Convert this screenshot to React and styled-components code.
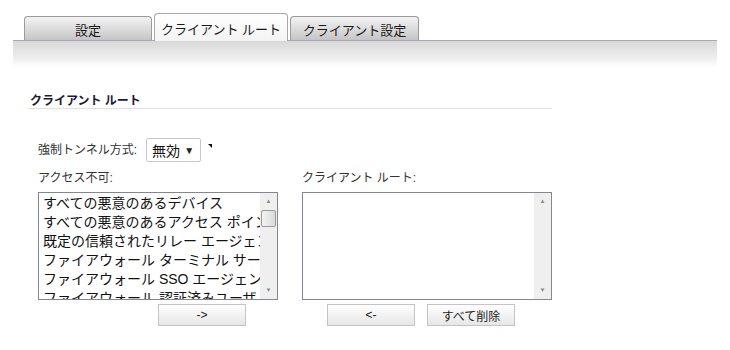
import React from 'react';
import styled, { createGlobalStyle } from 'styled-components';

const GlobalStyle = createGlobalStyle`
  body {
    margin: 0;
    background: #fff;
    font-family: "Liberation Sans", "Noto Sans CJK JP", sans-serif;
  }
`;

const tabs = ['設定', 'クライアント ルート', 'クライアント設定'];

const blocked = [
  'すべての悪意のあるデバイス',
  'すべての悪意のあるアクセス ポイント',
  '既定の信頼されたリレー エージェント',
  'ファイアウォール ターミナル サーバ',
  'ファイアウォール SSO エージェント',
  'ファイアウォール 認証済みユーザ',
];

function ScrollList({ items, width, thumb }) {
  return (
    <ListBox width={width}>
      <ListItems>
        {items.map((item, i) => (
          <ListItem key={i}>{item}</ListItem>
        ))}
      </ListItems>
      <ScrollTrack>
        <Arrow>▲</Arrow>
        <ThumbArea>{thumb && <Thumb />}</ThumbArea>
        <Arrow>▼</Arrow>
      </ScrollTrack>
    </ListBox>
  );
}

function App() {
  return (
    <Page>
      <GlobalStyle />
      <TabBar>
        {tabs.map((t, i) => (
          <Tab key={t} active={i === 1} width={i === 0 ? 128 : i === 1 ? 134 : 129}>
            {t}
          </Tab>
        ))}
      </TabBar>
      <Band />
      <Content>
        <SectionTitle>クライアント ルート</SectionTitle>
        <TunnelRow>
          <Label>強制トンネル方式:</Label>
          <Select>
            <span>無効</span>
            <Caret>▼</Caret>
          </Select>
          <Corner />
        </TunnelRow>
        <Columns>
          <Column>
            <Label>アクセス不可:</Label>
            <ScrollList items={blocked} width={240} thumb />
            <ButtonRow pad={120}>
              <Button>-&gt;</Button>
            </ButtonRow>
          </Column>
          <Column>
            <Label>クライアント ルート:</Label>
            <ScrollList items={[]} width={250} />
            <ButtonRow pad={25}>
              <Button>&lt;-</Button>
              <Button>すべて削除</Button>
            </ButtonRow>
          </Column>
        </Columns>
      </Content>
    </Page>
  );
}

export default App;

const Page = styled.div`
  width: 730px;
  height: 350px;
  padding-top: 12px;
  box-sizing: border-box;
  overflow: hidden;
`;

const TabBar = styled.div`
  display: flex;
  align-items: flex-end;
  gap: 2px;
  height: 28px;
  margin-left: 24px;
`;

const Tab = styled.div`
  width: ${p => p.width}px;
  height: ${p => (p.active ? 28 : 24)}px;
  box-sizing: border-box;
  border: 1px solid ${p => (p.active ? '#a8a8a8' : '#9a9a9a')};
  border-bottom: none;
  border-radius: 4px 4px 0 0;
  background: ${p =>
    p.active
      ? 'linear-gradient(#ffffff, #f3f3f3)'
      : 'linear-gradient(#f2f2f2, #d8d8d8 60%, #c4c4c4)'};
  display: flex;
  align-items: center;
  justify-content: center;
  font-size: 13px;
  color: #1a1a1a;
  padding-top: ${p => (p.active ? 2 : 1)}px;
  position: relative;
  z-index: ${p => (p.active ? 2 : 1)};
  margin-bottom: ${p => (p.active ? -1 : 0)}px;
`;

const Band = styled.div`
  margin: 0 13px;
  height: 26px;
  border-top: 1px solid #aaa6bd;
  background: linear-gradient(#d8d8d8, #f0f0f0 70%, #ffffff);
`;

const Content = styled.div`
  padding-left: 28px;
`;

const SectionTitle = styled.div`
  width: 522px;
  margin-top: 27px;
  padding: 0 0 0 2px;
  line-height: 14px;
  border-bottom: 1px solid #e0e0e4;
  font-size: 12px;
  font-weight: bold;
  color: #1a1a33;
`;

const TunnelRow = styled.div`
  display: flex;
  align-items: center;
  margin-top: 29px;
  padding-left: 10px;
`;

const Label = styled.div`
  font-size: 12px;
  line-height: 16px;
  color: #333;
`;

const Select = styled.div`
  width: 55px;
  height: 24px;
  margin-left: 9px;
  box-sizing: border-box;
  border: 1px solid #c8c8cc;
  border-radius: 2px;
  display: flex;
  align-items: center;
  justify-content: space-between;
  padding: 0 6px 0 5px;
  font-size: 14px;
  color: #111;
`;

const Caret = styled.span`
  font-size: 10px;
  color: #222;
`;

const Corner = styled.div`
  align-self: flex-start;
  margin: 6px 0 0 7px;
  width: 0;
  height: 0;
  border-top: 4px solid #111;
  border-left: 4px solid transparent;
`;

const Columns = styled.div`
  display: flex;
  gap: 24px;
  margin-top: 8px;
  padding-left: 10px;
`;

const Column = styled.div`
  display: flex;
  flex-direction: column;
  gap: 6px;
`;

const ListBox = styled.div`
  width: ${p => p.width}px;
  height: 108px;
  box-sizing: border-box;
  border: 1px solid #828790;
  display: flex;
  background: #fff;
`;

const ListItems = styled.div`
  flex: 1;
  overflow: hidden;
  padding: 1px 0 0 4px;
`;

const ListItem = styled.div`
  white-space: nowrap;
  font-size: 14px;
  line-height: 19px;
  color: #111;
`;

const ScrollTrack = styled.div`
  width: 17px;
  background: #efefef;
  display: flex;
  flex-direction: column;
  align-items: center;
`;

const Arrow = styled.div`
  height: 17px;
  line-height: 17px;
  font-size: 6px;
  color: #8a8a8a;
`;

const ThumbArea = styled.div`
  flex: 1;
  width: 100%;
`;

const Thumb = styled.div`
  margin: 0 auto;
  width: 15px;
  height: 17px;
  box-sizing: border-box;
  border: 1px solid #9a9a9a;
  border-radius: 2px;
  background: linear-gradient(90deg, #f4f4f4, #dadada);
`;

const ButtonRow = styled.div`
  display: flex;
  gap: 12px;
  margin-top: -2px;
  padding-left: ${p => p.pad}px;
`;

const Button = styled.div`
  min-width: 88px;
  height: 22px;
  box-sizing: border-box;
  border: 1px solid #c4c4c4;
  background: linear-gradient(#ffffff, #e6e6e6);
  display: flex;
  align-items: center;
  justify-content: center;
  font-size: 12px;
  color: #222;
`;
